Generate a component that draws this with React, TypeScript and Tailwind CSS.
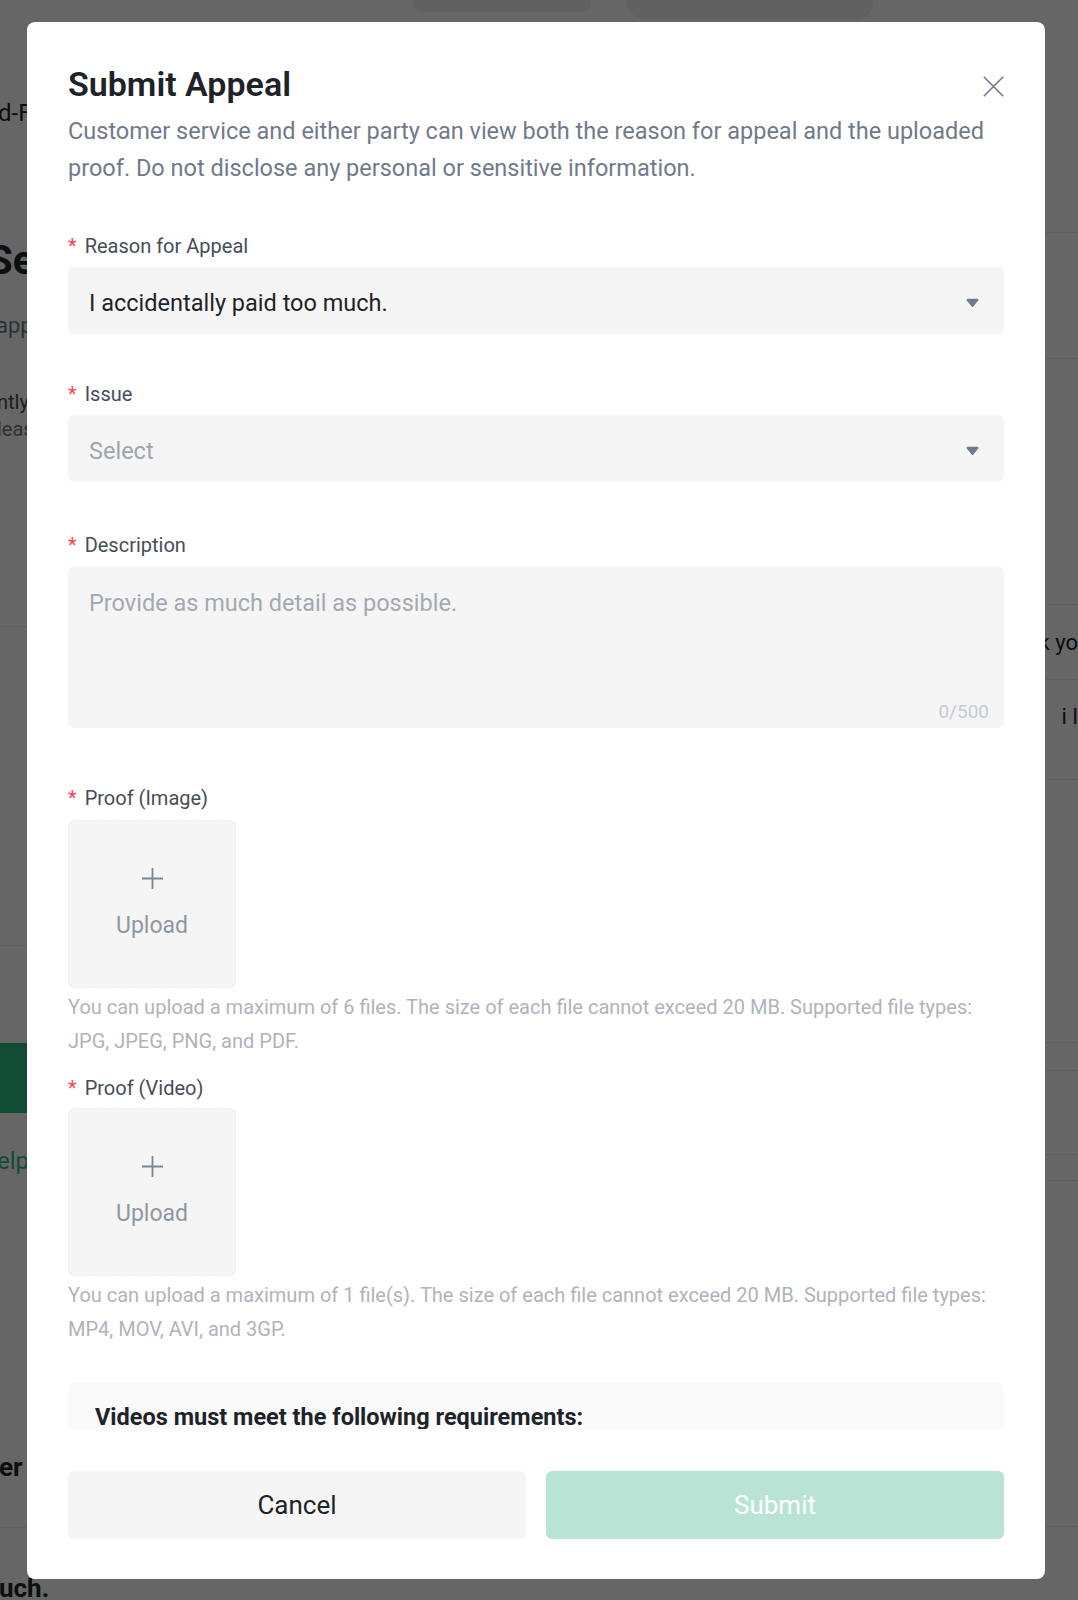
import React from "react";

function Req({ children, className }: { children: React.ReactNode; className: string }) {
  return (
    <div className={"flex text-[20px] leading-[28px] text-[#474d57] " + className}>
      <span className="mr-[8px] text-[#f6465d]">*</span>
      <span>{children}</span>
    </div>
  );
}

function Caret() {
  return (
    <svg className="mt-[4px]" width="13" height="10" viewBox="0 0 13 10">
      <path d="M1.6 0.8h9.8a1.1 1.1 0 0 1 .85 1.8l-4.9 5.9a1.1 1.1 0 0 1-1.7 0L.75 2.6A1.1 1.1 0 0 1 1.6.8z" fill="#707a8a" />
    </svg>
  );
}

function UploadBox() {
  return (
    <div className="flex h-[168px] w-[168px] flex-col items-center justify-center rounded-[6px] border border-dashed border-[#ededed] bg-[#f5f5f5]">
      <svg width="21" height="21" viewBox="0 0 21 21">
        <path d="M10.5 0v21M0 10.5h21" stroke="#7d8592" strokeWidth="1.8" />
      </svg>
      <span className="mt-[22px] text-[23px] leading-[30px] text-[#8f97a2]">Upload</span>
    </div>
  );
}

function Modal() {
  return (
    <div className="flex h-[1557px] w-[1018px] flex-col rounded-[8px] bg-white px-[41px] pb-[40px] pt-[40px]">
      <div className="min-h-0 flex-1 overflow-hidden">
        <div className="flex h-[44px] items-start justify-between">
          <h2 className="text-[34px] font-semibold leading-[44px] text-[#1e2329]">Submit Appeal</h2>
          <button className="mt-[14px]" aria-label="Close">
            <svg width="21" height="21" viewBox="0 0 21 21">
              <path d="M0.8 0.8l19.4 19.4M20.2 0.8L0.8 20.2" stroke="#707a8a" strokeWidth="1.6" />
            </svg>
          </button>
        </div>
        <p className="mt-[7px] text-[23.5px] leading-[37px] text-[#707a8a]">
          Customer service and either party can view both the reason for appeal and the uploaded proof. Do not disclose any personal or sensitive information.
        </p>

        <Req className="mt-[45px] mb-[7px]">Reason for Appeal</Req>
        <div className="flex h-[67px] items-center justify-between rounded-[6px] bg-[#f5f5f5] pl-[21px] pr-[25px]">
          <span className="pt-[6px] text-[23.5px] text-[#1e2329]">I accidentally paid too much.</span>
          <Caret />
        </div>

        <Req className="mt-[46px] mb-[7px]">Issue</Req>
        <div className="flex h-[67px] items-center justify-between rounded-[6px] bg-[#f5f5f5] pl-[21px] pr-[25px]">
          <span className="pt-[6px] text-[23.5px] text-[#9ea5ae]">Select</span>
          <Caret />
        </div>

        <Req className="mt-[49px] mb-[7px]">Description</Req>
        <div className="relative h-[162px] rounded-[6px] bg-[#f5f5f6] px-[21px] pt-[19px]">
          <span className="text-[23.5px] leading-[36px] text-[#a3a9b2]">Provide as much detail as possible.</span>
          <span className="absolute bottom-[4px] right-[15px] text-[19px] leading-[24px] text-[#c5cad1]">0/500</span>
        </div>

        <Req className="mt-[56px] mb-[8px]">Proof (Image)</Req>
        <UploadBox />
        <p className="mt-[2px] text-[20px] leading-[34px] text-[#aeb4bc]">
          You can upload a maximum of 6 files. The size of each file cannot exceed 20 MB. Supported file types: JPG, JPEG, PNG, and PDF.
        </p>

        <Req className="mt-[16px] mb-[6px]">Proof (Video)</Req>
        <UploadBox />
        <p className="mt-[2px] text-[20px] leading-[34px] text-[#aeb4bc]">
          You can upload a maximum of 1 file(s). The size of each file cannot exceed 20 MB. Supported file types: MP4, MOV, AVI, and 3GP.
        </p>

        <div className="mt-[36px] h-[220px] rounded-[8px] bg-[#fafafa] px-[27px] pt-[17px]">
          <div className="text-[23.5px] font-bold leading-[36px] text-[#1e2329]">Videos must meet the following requirements:</div>
        </div>
      </div>

      <div className="mt-[42px] flex gap-[20px]">
        <button className="h-[68px] flex-1 rounded-[6px] bg-[#f5f5f5] text-[26px] font-normal text-[#1e2329]">Cancel</button>
        <button className="h-[68px] flex-1 rounded-[6px] bg-[#b9e3d4] text-[26px] font-normal text-white">Submit</button>
      </div>
    </div>
  );
}

function BackgroundPage() {
  return (
    <div className="flex flex-col">
      <div className="flex h-[55px] items-start">
        <div className="ml-[412px] h-[12px] w-[179px] rounded-b-[10px] bg-[#f2f2f2]" />
        <div className="ml-[36px] h-[20px] w-[247px] rounded-b-[20px] bg-[#f2f2f2]" />
      </div>
      <div className="flex">
        <div className="flex w-[540px] flex-col whitespace-nowrap text-[#1e2329]">
          <div className="-ml-[2px] mt-[44px] text-[24px] leading-[28px]">d-F</div>
          <div className="-ml-[12px] mt-[110px] text-[40px] font-bold leading-[48px]">Se</div>
          <div className="-ml-[4px] mt-[27px] text-[22px] leading-[28px] text-[#707a8a]">app</div>
          <div className="-ml-[3px] mt-[49px] text-[20px] leading-[27px] text-[#474d57]">
            ntly
            <br />
            <span className="text-[#707a8a]">leas</span>
          </div>
          <div className="mt-[183px] h-px bg-[#eaecef]" />
          <div className="mt-[318px] h-px bg-[#eaecef]" />
          <div className="mt-[97px] h-[70px] bg-[#2ebd85]" />
          <div className="-ml-[3px] mt-[34px] text-[24px] leading-[28px] text-[#2ebd85]">elp</div>
          <div className="-ml-[1px] mt-[277px] text-[26px] font-bold leading-[30px]">er l</div>
          <div className="mt-[45px] h-px bg-[#eaecef]" />
          <div className="-ml-[1px] mt-[45px] text-[26px] font-bold leading-[30px]">uch.</div>
        </div>
        <div className="flex flex-1 flex-col whitespace-nowrap text-[#1e2329]">
          <div className="h-[178px] border-b border-[#eaecef]" />
          <div className="h-[126px] border-b border-[#eaecef]" />
          <div className="h-[246px] border-b border-[#eaecef]" />
          <div className="flex h-[75px] items-center border-b border-[#eaecef] pl-[509px] text-[22px]">k yo</div>
          <div className="h-[100px] border-b border-[#eaecef] pl-[532px] pt-[23px] text-[22px] leading-[28px]">i l</div>
          <div className="h-[263px] border-b border-[#eaecef]" />
          <div className="h-[28px] border-b border-[#eaecef]" />
          <div className="h-[84px] border-b border-[#eaecef]" />
          <div className="h-[26px] border-b border-[#eaecef]" />
          <div className="h-[346px] border-b border-[#eaecef]" />
        </div>
      </div>
    </div>
  );
}

export default function App() {
  return (
    <div className="relative h-[1600px] w-[1078px] overflow-hidden bg-white [font-family:Roboto,'Noto_Sans',sans-serif]">
      <BackgroundPage />
      <div className="absolute inset-0 bg-black/60 pl-[27px] pt-[22px]">
        <Modal />
      </div>
    </div>
  );
}
